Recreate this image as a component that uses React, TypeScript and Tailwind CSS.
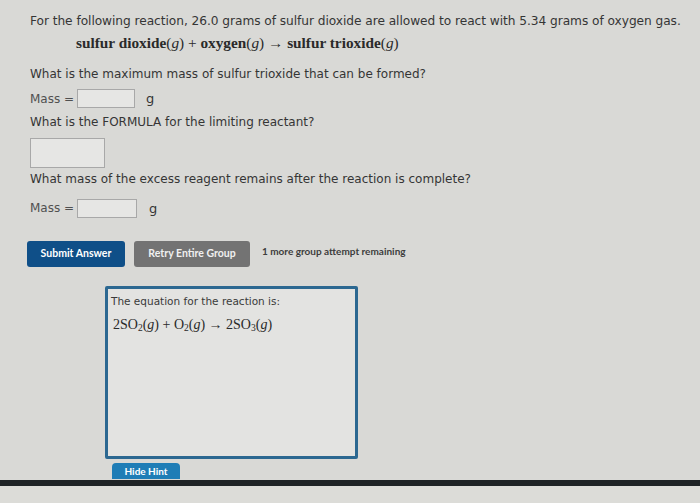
import React from "react";

const sans = { fontFamily: '"DejaVu Sans", Verdana, sans-serif' };
const serif = { fontFamily: '"Liberation Serif", "Times New Roman", serif' };
const lato = { fontFamily: '"Lato", "DejaVu Sans", sans-serif' };

function Box({ w, h }: { w: string; h: string }) {
  return <div className={`${w} ${h} border border-[#a8a8a8] bg-[#e6e6e4]`} />;
}

export default function App() {
  return (
    <div className="w-[700px] h-[503px] bg-[#d9d9d6] overflow-hidden flex flex-col text-[#353535]" style={sans}>
      <div className="shrink-0 flex flex-col pl-[30px] pt-[13px]">
        <div className="text-[12.2px] leading-[16px] tracking-[-0.05px]">
          For the following reaction, 26.0 grams of sulfur dioxide are allowed to react with 5.34 grams of oxygen gas.
        </div>
        <div className="ml-[46px] mt-[5px] text-[15.3px] leading-[18px] text-[#2a2a2a]" style={serif}>
          <span className="font-semibold">sulfur dioxide</span>(<i>g</i>) + <span className="font-semibold">oxygen</span>(<i>g</i>) → <span className="font-semibold">sulfur trioxide</span>(<i>g</i>)
        </div>
        <div className="mt-[14px] text-[12px] leading-[16px]">What is the maximum mass of sulfur trioxide that can be formed?</div>
        <div className="mt-[7px] flex items-center text-[12px]">
          <span className="text-[#505050]">Mass =</span>
          <div className="ml-[3px]"><Box w="w-[58px]" h="h-[19px]" /></div>
          <span className="ml-[11px] text-[13px]">g</span>
        </div>
        <div className="mt-[5px] text-[12px] leading-[16px]">What is the FORMULA for the limiting reactant?</div>
        <div className="mt-[8px]"><Box w="w-[75px]" h="h-[30px]" /></div>
        <div className="mt-[3px] text-[12px] leading-[16px]">What mass of the excess reagent remains after the reaction is complete?</div>
        <div className="mt-[12px] flex items-center text-[12px]">
          <span className="text-[#505050]">Mass =</span>
          <div className="ml-[3px]"><Box w="w-[60px]" h="h-[19px]" /></div>
          <span className="ml-[12px] text-[13px]">g</span>
        </div>
        <div className="mt-[23px] flex items-center -ml-[3px]">
          <div className="w-[98px] h-[26px] rounded-[3px] bg-[#0f4f88] text-white text-[10.5px] font-bold flex items-center justify-center" style={lato}>
            Submit Answer
          </div>
          <div className="ml-[9px] w-[116px] h-[26px] rounded-[3px] bg-[#737373] text-[#f0f0f0] text-[10.5px] font-bold flex items-center justify-center" style={lato}>
            Retry Entire Group
          </div>
          <div className="ml-[12px] -mt-[5px] text-[10px] font-bold text-[#3d3d3d]" style={lato}>
            1 more group attempt remaining
          </div>
        </div>
        <div className="ml-[75px] mt-[19px] w-[253px] h-[173px] border-[3px] border-[#2c6891] rounded-[2px] bg-[#e3e3e1] px-[3px] pt-[5px]">
          <div className="text-[10.5px] leading-[14px] text-[#3a3a3a]">The equation for the reaction is:</div>
          <div className="mt-[9px] ml-[2px] text-[14px] leading-[16px] text-[#2a2a2a]" style={serif}>
            2SO<sub className="text-[9.5px]">2</sub>(<i>g</i>) + O<sub className="text-[9.5px]">2</sub>(<i>g</i>) → 2SO<sub className="text-[9.5px]">3</sub>(<i>g</i>)
          </div>
        </div>
        <div className="ml-[82px] mt-[4px] w-[68px] h-[16px] rounded-t-[4px] bg-[#1f7db6] text-white text-[10px] font-bold flex items-center justify-center" style={lato}>
          Hide Hint
        </div>
      </div>
      <div className="mt-[1px] h-[6px] bg-[#1f2326] shrink-0" />
      <div className="flex-1 bg-[#dcdcd8]" />
    </div>
  );
}
